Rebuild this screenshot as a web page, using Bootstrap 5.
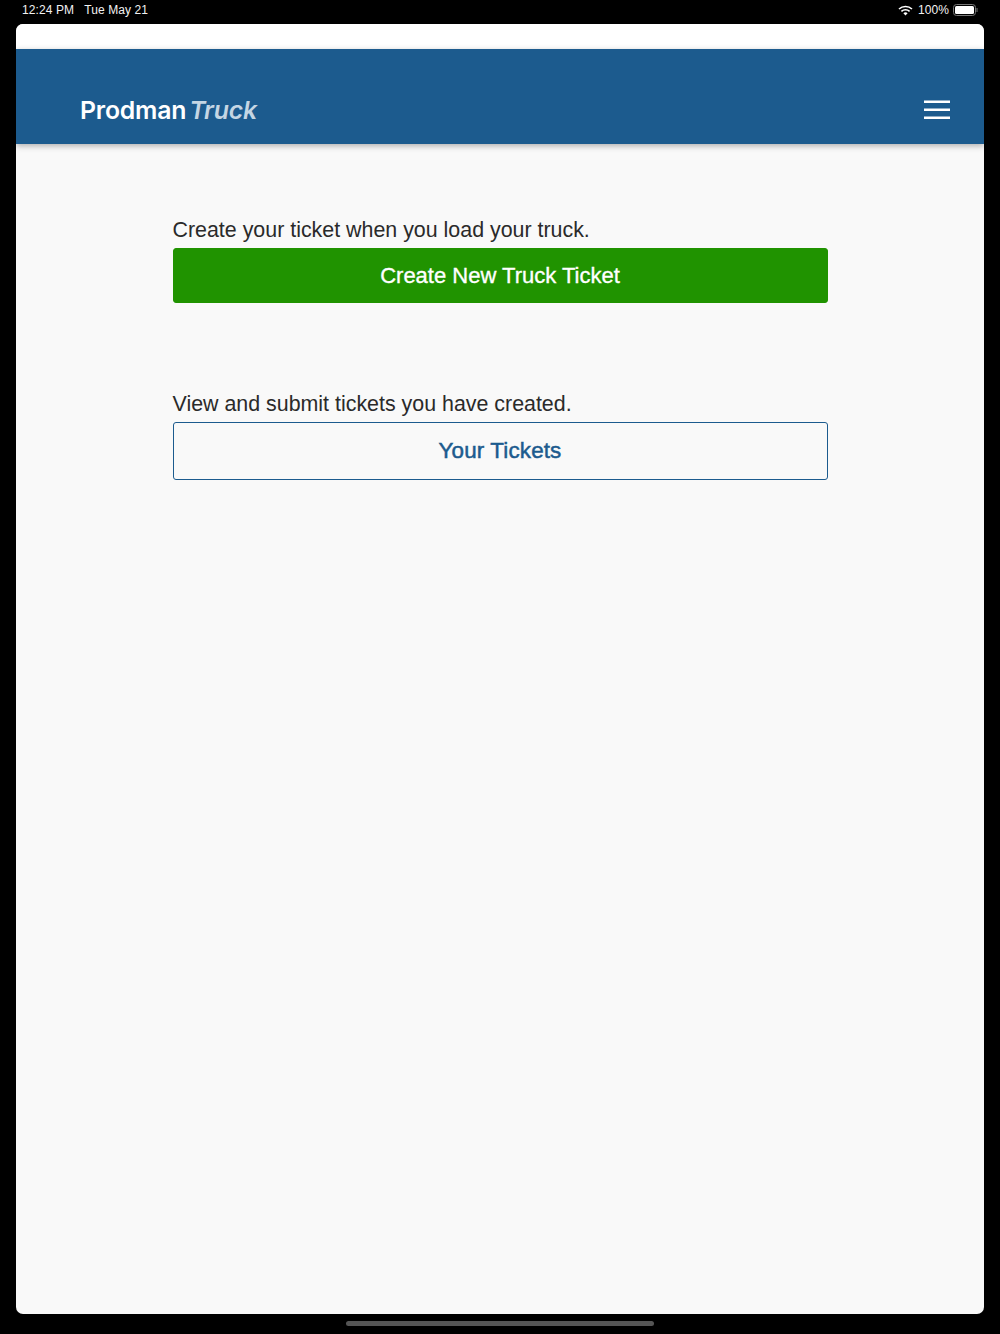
<!DOCTYPE html>
<html>
<head>
    <title>Prodman Truck</title>
    <meta name="viewport" content="width=device-width, initial-scale=1.0">
    <link href="https://cdn.jsdelivr.net/npm/bootstrap@5.3.2/dist/css/bootstrap.min.css" rel="stylesheet">
    <style>
        html, body {
            height: 1334px;
            overflow: hidden;
        }

        body {
            font-family: "Liberation Sans", Arial, sans-serif;
            background-color: #000;
        }

        .status-strip {
            height: 24px;
            padding: 0 22px;
            color: #f2f2f2;
            font-size: 12px;
            line-height: 20px;
            letter-spacing: .1px;
        }

        .status-strip .status-date {
            margin-left: 10px;
        }

        .status-icons {
            height: 20px;
        }

        .wifi-glyph {
            width: 15px;
            height: 11px;
            margin-right: 5px;
        }

        .battery-glyph {
            width: 25px;
            height: 12px;
            margin-left: 4px;
        }

        .app-window {
            height: 1290px;
            margin: 0 16px;
            background-color: #f9f9f9;
            border-radius: 7px;
            overflow: hidden;
        }

        .top-gap {
            height: 25px;
            background-color: #fff;
        }

        .brand-bar {
            height: 95px;
            padding: 44px 34px 0 64px;
            background-color: #1c5b8e;
            box-shadow: 0 2px 6px rgba(0, 0, 0, .3);
            align-items: flex-start;
        }

        .brand-name {
            font-family: Inter, "Liberation Sans", sans-serif;
            font-size: 24.8px;
            font-weight: 600;
            line-height: 34px;
            letter-spacing: -.2px;
            color: #fff;
        }

        .brand-name em {
            margin-left: 3px;
            font-weight: 600;
            color: #c4d6e4;
        }

        .menu-toggle {
            width: 26px;
            height: 20px;
            margin-top: 7px;
        }

        .ticket-panel {
            width: 655px;
            margin: 0 auto;
            padding-top: 72px;
        }

        .ticket-label {
            margin: 0 0 4px;
            font-size: 21.4px;
            line-height: 28px;
            color: #2a2a2a;
        }

        .ticket-btn {
            display: block;
            width: 100%;
            font-size: 22px;
            line-height: 28px;
            border-radius: 3px;
            -webkit-text-stroke: .35px currentColor;
        }

        .ticket-btn-new {
            height: 55px;
            margin-bottom: 87px;
            background-color: #209300;
            border: 1px solid #209300;
            color: #fff;
        }

        .ticket-btn-list {
            height: 58px;
            background-color: transparent;
            border: 1.5px solid #1c5b8e;
            color: #1c5b8e;
            font-size: 22.4px;
            letter-spacing: .15px;
            -webkit-text-stroke: .5px currentColor;
        }

        .home-pill {
            width: 308px;
            height: 5px;
            margin: 7px auto 0;
            background-color: #555;
            border-radius: 3px;
        }
    </style>
</head>
<body>

<div class="status-strip d-flex align-items-start">
    <span>12:24 PM</span>
    <span class="status-date">Tue May 21</span>
    <span class="status-icons ms-auto d-flex align-items-center">
        <svg class="wifi-glyph" viewBox="0 0 15 11">
            <path d="M1 4 A9.5 9.5 0 0 1 14 4" fill="none" stroke="#fff" stroke-width="1.6"/>
            <path d="M3.4 6.3 A6 6 0 0 1 11.6 6.3" fill="none" stroke="#fff" stroke-width="1.6"/>
            <path d="M5.4 8.2 A3 3 0 0 1 9.6 8.2 L7.5 10.6 Z" fill="#fff"/>
        </svg>
        100%
        <svg class="battery-glyph" viewBox="0 0 25 12">
            <rect x=".5" y=".5" width="22" height="11" rx="3" fill="none" stroke="#777"/>
            <rect x="2" y="2" width="19" height="8" rx="1.5" fill="#fff"/>
            <rect x="23.5" y="4" width="1" height="4" fill="#777"/>
        </svg>
    </span>
</div>

<div class="app-window">
    <div class="top-gap"></div>
    <nav class="brand-bar d-flex justify-content-between">
        <span class="brand-name">Prodman<em>Truck</em></span>
        <svg class="menu-toggle" viewBox="0 0 26 20">
            <path d="M0 1.8H26M0 9.8H26M0 17.8H26" stroke="#fff" stroke-width="2.4"/>
        </svg>
    </nav>
    <div class="ticket-panel">
        <p class="ticket-label">Create your ticket when you load your truck.</p>
        <button type="button" class="btn ticket-btn ticket-btn-new">Create New Truck Ticket</button>
        <p class="ticket-label">View and submit tickets you have created.</p>
        <button type="button" class="btn ticket-btn ticket-btn-list">Your Tickets</button>
    </div>
</div>

<div class="home-pill"></div>

<script src="https://cdn.jsdelivr.net/npm/bootstrap@5.3.2/dist/js/bootstrap.bundle.min.js"></script>
</body>
</html>
